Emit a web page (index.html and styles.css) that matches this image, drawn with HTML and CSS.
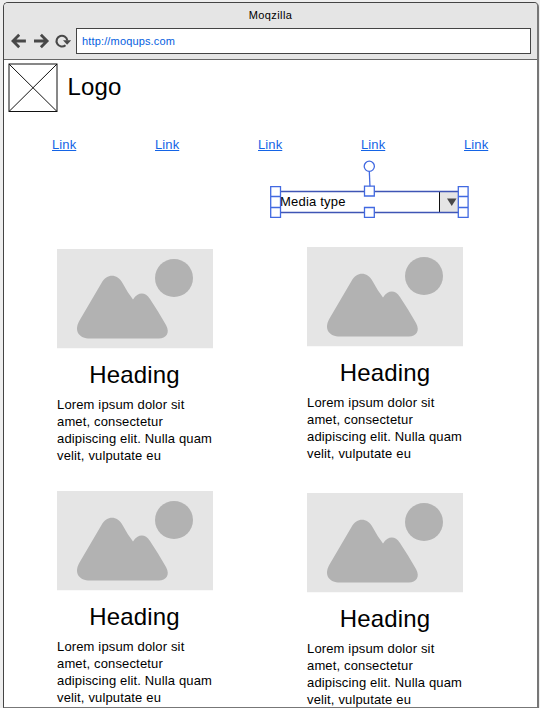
FILE: index.html
```html
<!DOCTYPE html>
<html lang="en">
<head>
<meta charset="utf-8">
<title>Moqzilla</title>
<link rel="stylesheet" href="styles.css">
</head>
<body>
<svg class="defs" width="0" height="0" aria-hidden="true">
  <symbol id="picture" viewBox="0 0 156 99.5">
    <rect width="156" height="99.5" fill="#e5e5e5"/>
    <circle cx="117" cy="29" r="19" fill="#b2b2b2"/>
    <path fill="#b2b2b2" d="M44.500 34C50 24.300 60 24.300 65.500 34Q70.500 43.500 76 50.500C81 43 88 42.500 93 50Q101 62 109 76C113.500 84 109 89.500 102 89.500H33C22 89.500 16.500 82 22.500 71.500Z"/>
  </symbol>
</svg>
<div class="window">
  <header class="chrome">
    <div class="title">Moqzilla</div>
    <div class="toolbar">
      <svg class="nav-icons" width="62" height="18" viewBox="0 0 62 18" fill="none" stroke="#484848" stroke-width="2.800">
        <path d="M15.900 9H3.500M9.200 2.800L3 9L9.200 15.200"/>
        <path d="M24 9H36.500M30.900 2.800L37.100 9L30.900 15.200"/>
        <path stroke-width="2.100" d="M55.500 13.200A5.400 5.400 0 1 1 57.300 8.500"/>
        <path fill="#484848" stroke="none" d="M53 8.200H61.200L57.100 12.700Z"/>
      </svg>
      <div class="address">http://moqups.com</div>
    </div>
  </header>
  <main>
    <div class="brand">
      <svg width="50" height="50" viewBox="0 0 50 50" fill="none" stroke="#111">
        <rect x="1" y="1" width="48" height="47.500"/>
        <path d="M1 1L49 48.500M49 1L1 48.500"/>
      </svg>
      <h1>Logo</h1>
    </div>
    <nav class="links">
      <a href="#">Link</a><a href="#">Link</a><a href="#">Link</a><a href="#">Link</a><a href="#">Link</a>
    </nav>
    <div class="select">
      <span class="value">Media type</span>
      <span class="toggle"><svg width="10" height="8" viewBox="0 0 10 8"><path fill="#484848" d="M0 .5H9.500L4.750 8Z"/></svg></span>
      <svg class="selection" width="200" height="60" viewBox="0 0 200 60" fill="#fff" stroke="#4169e1" stroke-width="1.300">
        <path d="M6 31.500H193M193 52.500H6" fill="none" stroke="#3f55b5" stroke-width="1.600"/>
        <path d="M99.300 11L100 27"/>
        <circle cx="99.300" cy="6.300" r="5.100"/>
        <path d="M.7 26.700h9.800v9.800H.7ZM.7 36.500h9.800v11H.7ZM.7 47.500h9.800v9.800H.7Z"/>
        <path d="M94.500 26.200h9.800v9.800h-9.800ZM94.500 47.500h9.800v9.800h-9.800Z"/>
        <path d="M188.300 26.700h9.800v9.800h-9.800ZM188.300 36.500h9.800v11h-9.800ZM188.300 47.500h9.800v9.800h-9.800Z"/>
      </svg>
    </div>
    <div class="columns">
      <div class="column first">
        <article><svg class="picture"><use href="#picture"/></svg><h2>Heading</h2><p>Lorem ipsum dolor sit<br>amet, consectetur<br>adipiscing elit. Nulla quam<br>velit, vulputate eu</p></article>
        <article><svg class="picture"><use href="#picture"/></svg><h2>Heading</h2><p>Lorem ipsum dolor sit<br>amet, consectetur<br>adipiscing elit. Nulla quam<br>velit, vulputate eu</p></article>
      </div>
      <div class="column second">
        <article><svg class="picture"><use href="#picture"/></svg><h2>Heading</h2><p>Lorem ipsum dolor sit<br>amet, consectetur<br>adipiscing elit. Nulla quam<br>velit, vulputate eu</p></article>
        <article><svg class="picture"><use href="#picture"/></svg><h2>Heading</h2><p>Lorem ipsum dolor sit<br>amet, consectetur<br>adipiscing elit. Nulla quam<br>velit, vulputate eu</p></article>
      </div>
    </div>
  </main>
</div>
</body>
</html>
```
FILE: styles.css
```css
* { box-sizing: border-box; }
body {
  margin: 0;
  height: 708px;
  overflow: hidden;
  padding: 2px 1px 0 3px;
  background: #eee;
  color: #000;
  font: 13px/17px "Liberation Sans", Arial, sans-serif;
  letter-spacing: .15px;
}
.defs { position: absolute; }
.window {
  height: 706px;
  overflow: hidden;
  border: 1px solid #444;
  border-right: 2px solid #777;
  border-bottom-color: #777;
  border-radius: 5px 5px 0 0;
  background: #fff;
}
.chrome {
  height: 57px;
  background: #e5e5e5;
  border-bottom: 1px solid #666;
}
.title {
  height: 25px;
  line-height: 25px;
  text-align: center;
  font-size: 11px;
  letter-spacing: .4px;
}
.toolbar {
  display: flex;
  align-items: center;
  padding: 0 6px 0 6px;
}
.nav-icons { margin-right: 4px; }
.address {
  flex: 1;
  height: 26px;
  padding-left: 5px;
  border: 1px solid #444;
  background: #fff;
  color: #0560e0;
  font-size: 11px;
  line-height: 24px;
  letter-spacing: .15px;
}
.brand {
  display: flex;
  align-items: flex-start;
  padding: 3px 0 0 4px;
  height: 76px;
}
h1, h2 {
  margin: 0;
  font-size: 24px;
  font-weight: 400;
  line-height: 28px;
  letter-spacing: .15px;
}
h1 { margin: 10px 0 0 9.5px; }
.links {
  display: grid;
  grid-template-columns: repeat(5, 103px);
  padding-left: 48px;
  height: 55px;
}
.links a {
  justify-self: start;
  height: 17px;
  color: #1464e6;
  letter-spacing: .1px;
}
.select {
  position: relative;
  display: flex;
  width: 189px;
  height: 22px;
  margin-left: 271px;
}
.value {
  flex: 1;
  padding-left: 5px;
  line-height: 21px;
  letter-spacing: .2px;
}
.toggle {
  width: 25px;
  padding: 7px 0 0 7px;
  border-left: 1px solid #111;
  background: #e5e5e5;
  line-height: 0;
}
.selection {
  position: absolute;
  left: -5px;
  top: -31px;
}
.columns {
  display: flex;
  gap: 94.5px;
  padding: 34px 0 0 52.5px;
}
.column {
  display: flex;
  flex-direction: column;
  width: 156px;
}
.first { padding-top: 2px; gap: 26px; }
.second { gap: 30px; }
article { height: 216px; }
.picture {
  display: block;
  width: 156px;
  height: 99.5px;
}
h2 {
  margin-top: 12px;
  text-align: center;
}
p {
  margin: 7px 0 0;
  padding-left: .5px;
  white-space: nowrap;
}
.second p { padding-left: 0; }
```
